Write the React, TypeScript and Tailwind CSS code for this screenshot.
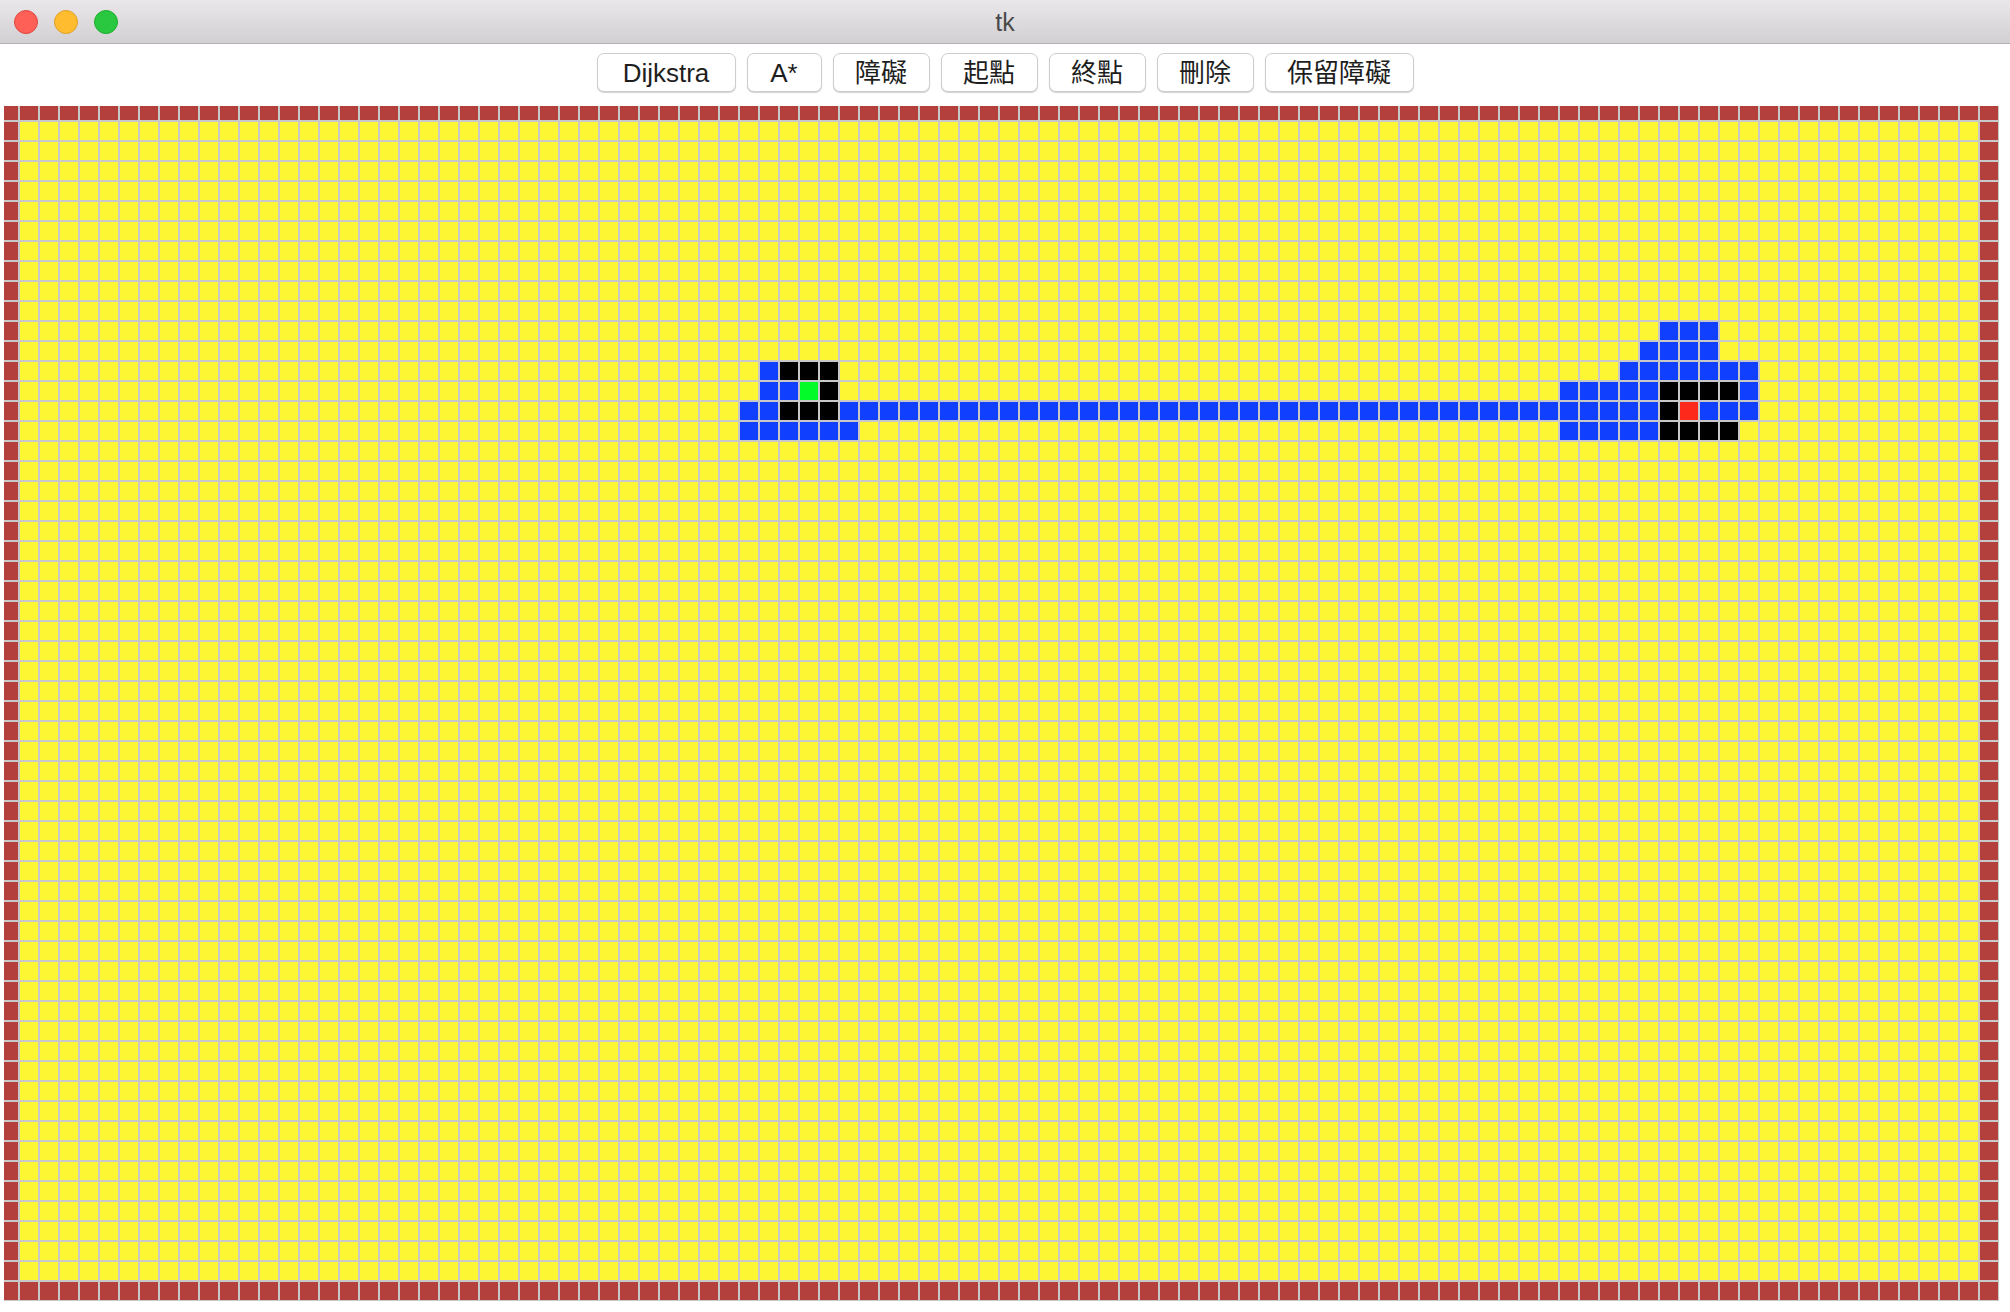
import React from "react";

const COLS = 100;
const ROWS = 60;

type C = "Y" | "W" | "B" | "K" | "G" | "R";

function buildGrid(): C[][] {
  const g: C[][] = [];
  for (let r = 0; r < ROWS; r++) {
    const row: C[] = [];
    for (let c = 0; c < COLS; c++) {
      row.push(r === 0 || r === ROWS - 1 || c === 0 || c === COLS - 1 ? "W" : "Y");
    }
    g.push(row);
  }
  const set = (r: number, c: number, v: C) => {
    g[r][c] = v;
  };
  const range = (r: number, a: number, b: number, v: C) => {
    for (let c = a; c <= b; c++) set(r, c, v);
  };
  // left structure
  set(13, 38, "B");
  range(13, 39, 41, "K");
  range(14, 38, 39, "B");
  set(14, 40, "G");
  set(14, 41, "K");
  range(15, 37, 38, "B");
  range(15, 39, 41, "K");
  range(15, 42, 82, "B");
  set(15, 83, "K");
  set(15, 84, "R");
  range(15, 85, 87, "B");
  range(16, 37, 42, "B");
  // right structure
  range(11, 83, 85, "B");
  range(12, 82, 85, "B");
  range(13, 81, 87, "B");
  range(14, 78, 82, "B");
  range(14, 83, 86, "K");
  set(14, 87, "B");
  range(16, 78, 82, "B");
  range(16, 83, 86, "K");
  return g;
}

const cls: Record<C, string> = {
  Y: "bg-[#fdf733]",
  W: "bg-[#b4403e]",
  B: "bg-[#113ffe]",
  K: "bg-black",
  G: "bg-[#02fb29]",
  R: "bg-[#fd2a1c]",
};

const buttons: { label: string; w: string }[] = [
  { label: "Dijkstra", w: "w-[139px]" },
  { label: "A*", w: "w-[75px]" },
  { label: "障礙", w: "w-[97px]" },
  { label: "起點", w: "w-[97px]" },
  { label: "終點", w: "w-[97px]" },
  { label: "刪除", w: "w-[97px]" },
  { label: "保留障礙", w: "w-[149px]" },
];

export default function App() {
  const grid = buildGrid();
  return (
    <div className="w-[2010px] h-[1312px] bg-white flex flex-col overflow-hidden font-['Liberation_Sans','Noto_Sans_CJK_TC',sans-serif]">
      {/* title bar */}
      <div className="relative h-[44px] shrink-0 bg-gradient-to-b from-[#e9e7e9] to-[#d2d0d2] border-b border-[#b2b0b2] flex items-center">
        <div className="flex items-center gap-[16px] pl-[14px]">
          <div className="w-[24px] h-[24px] rounded-full bg-[#fe5f57] border border-[#e2463f]" />
          <div className="w-[24px] h-[24px] rounded-full bg-[#febc2e] border border-[#e0a028]" />
          <div className="w-[24px] h-[24px] rounded-full bg-[#2ac840] border border-[#1cae2c]" />
        </div>
        <div className="absolute inset-0 flex items-center justify-center text-[25px] text-[#4a4a4a] leading-none pt-[2px]">
          tk
        </div>
      </div>
      {/* toolbar */}
      <div className="h-[62px] shrink-0 flex justify-center items-start pt-[9px] gap-[11px]">
        {buttons.map((b) => (
          <div
            key={b.label}
            className={`${b.w} h-[39px] bg-white border border-[#cdcdcd] rounded-[7px] shadow-[0_1px_1px_rgba(0,0,0,0.18)] flex items-center justify-center text-[26px] text-[#1e1e1e] leading-none`}
          >
            {b.label}
          </div>
        ))}
      </div>
      {/* canvas */}
      <div className="ml-[4px] self-start bg-[#c8c8c8] pr-[1px] pb-[1px]">
        <div className="grid grid-cols-[14px_repeat(99,18px)] grid-rows-[14px_repeat(59,18px)] gap-[2px]">
          {grid.map((row, r) =>
            row.map((v, c) => <div key={r * COLS + c} className={cls[v]} />)
          )}
        </div>
      </div>
    </div>
  );
}
